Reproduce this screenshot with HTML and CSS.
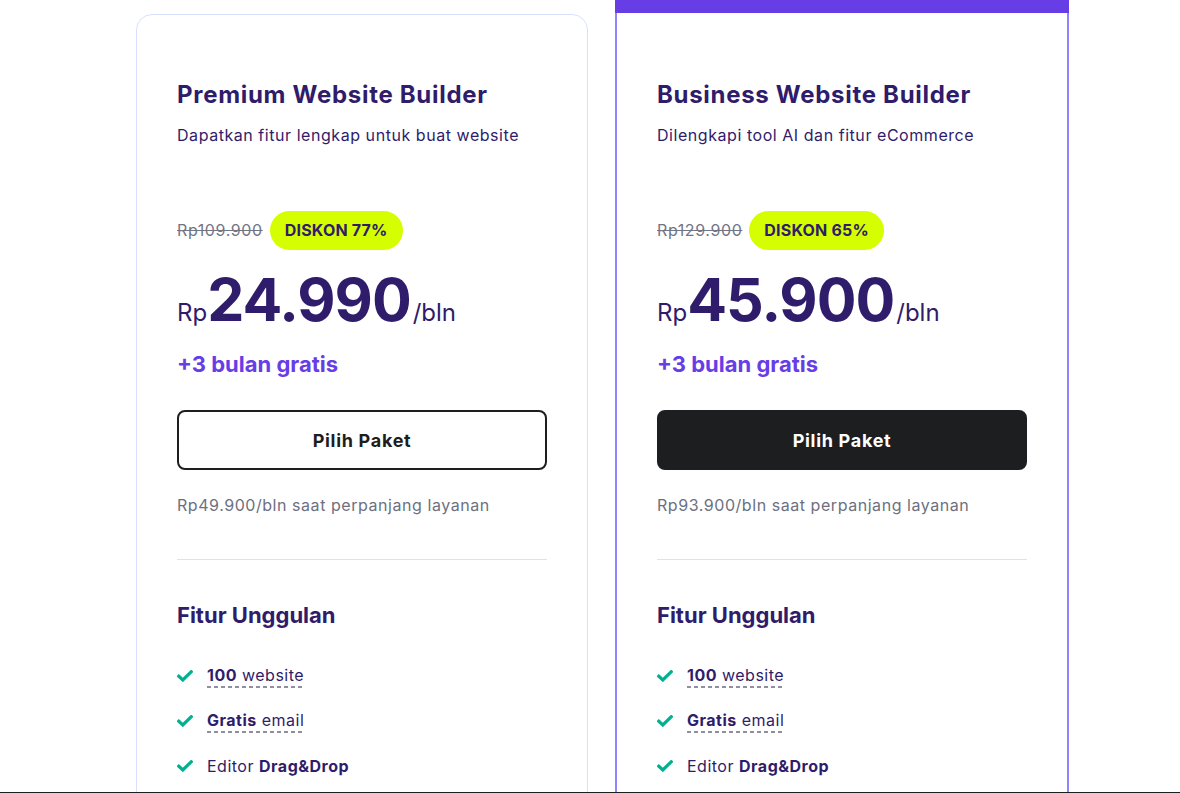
FILE: index.html
```html
<!DOCTYPE html>
<html lang="id">
<head>
<meta charset="utf-8">
<title>Paket Website Builder</title>
<link rel="stylesheet" href="styles.css">
</head>
<body>
<div class="viewport">
  <div class="cards">
    <div class="card">
      <h2 class="title">Premium Website Builder</h2>
      <p class="subtitle">Dapatkan fitur lengkap untuk buat website</p>
      <div class="discount-row">
        <span class="old-price">Rp109.900</span>
        <span class="badge">DISKON 77%</span>
      </div>
      <div class="price">
        <span class="currency">Rp</span><span class="amount">24.990</span><span class="period">/bln</span>
      </div>
      <div class="bonus">+3 bulan gratis</div>
      <button class="btn btn-outline">Pilih Paket</button>
      <p class="renewal">Rp49.900/bln saat perpanjang layanan</p>
      <hr class="divider">
      <h3 class="features-title">Fitur Unggulan</h3>
      <ul class="features">
        <li><svg class="check" viewBox="0 0 16 12"><path d="M1.8 6.2 L5.8 10 L14.2 1.8"/></svg><span class="dashed"><b>100</b> website</span></li>
        <li><svg class="check" viewBox="0 0 16 12"><path d="M1.8 6.2 L5.8 10 L14.2 1.8"/></svg><span class="dashed"><b>Gratis</b> email</span></li>
        <li><svg class="check" viewBox="0 0 16 12"><path d="M1.8 6.2 L5.8 10 L14.2 1.8"/></svg><span>Editor <b>Drag&amp;Drop</b></span></li>
      </ul>
    </div>
    <div class="featured">
      <div class="ribbon"></div>
      <div class="card card-featured">
        <h2 class="title">Business Website Builder</h2>
        <p class="subtitle">Dilengkapi tool AI dan fitur eCommerce</p>
        <div class="discount-row">
          <span class="old-price">Rp129.900</span>
          <span class="badge">DISKON 65%</span>
        </div>
        <div class="price">
          <span class="currency">Rp</span><span class="amount">45.900</span><span class="period">/bln</span>
        </div>
        <div class="bonus">+3 bulan gratis</div>
        <button class="btn btn-dark">Pilih Paket</button>
        <p class="renewal">Rp93.900/bln saat perpanjang layanan</p>
        <hr class="divider">
        <h3 class="features-title">Fitur Unggulan</h3>
        <ul class="features">
          <li><svg class="check" viewBox="0 0 16 12"><path d="M1.8 6.2 L5.8 10 L14.2 1.8"/></svg><span class="dashed"><b>100</b> website</span></li>
          <li><svg class="check" viewBox="0 0 16 12"><path d="M1.8 6.2 L5.8 10 L14.2 1.8"/></svg><span class="dashed"><b>Gratis</b> email</span></li>
          <li><svg class="check" viewBox="0 0 16 12"><path d="M1.8 6.2 L5.8 10 L14.2 1.8"/></svg><span>Editor <b>Drag&amp;Drop</b></span></li>
        </ul>
      </div>
    </div>
  </div>
</div>
</body>
</html>
```

FILE: styles.css
```css
* { box-sizing: border-box; }

html, body {
  margin: 0;
  padding: 0;
  background: #ffffff;
}

body {
  font-family: Inter, "Noto Sans", "DejaVu Sans", sans-serif;
  color: #2f1c6a;
}

.viewport {
  height: 793px;
  overflow: hidden;
  border-bottom: 1px solid #1d1e20;
}

.cards {
  display: flex;
  align-items: flex-start;
  gap: 27px;
  padding-left: 136px;
}

.card {
  width: 452px;
  margin-top: 14px;
  border: 1px solid #d8e0fd;
  border-radius: 16px;
  padding: 64px 40px 40px;
  background: #fff;
}

.featured {
  width: 454px;
  display: flex;
  flex-direction: column;
}

.ribbon {
  height: 13px;
  background: #673de6;
}

.card-featured {
  width: 454px;
  margin-top: 0;
  border: 2px solid #8c85ff;
  border-top: 0;
  border-radius: 0;
  padding-top: 66px;
}

.title {
  margin: 0;
  font-size: 24px;
  line-height: 32px;
  font-weight: 700;
  color: #2f1c6a;
  letter-spacing: 0.7px;
}

.subtitle {
  margin: 12px 0 0;
  font-size: 16px;
  line-height: 24px;
  color: #2f1c6a;
  letter-spacing: 0.55px;
}

.discount-row {
  display: flex;
  align-items: center;
  gap: 7px;
  margin-top: 63px;
  height: 40px;
}

.old-price {
  font-size: 16px;
  color: #727586;
  text-decoration: line-through;
  letter-spacing: 0.6px;
}

.badge {
  height: 39px;
  display: inline-flex;
  align-items: center;
  padding: 0 15px;
  border-radius: 20px;
  background: #d5ff00;
  font-size: 16px;
  font-weight: 700;
  color: #2f1c6a;
  letter-spacing: 0.2px;
}

.price {
  display: flex;
  align-items: baseline;
  margin-top: 16px;
  height: 68px;
  color: #2f1c6a;
}

.currency {
  font-size: 24px;
}

.amount {
  font-size: 59px;
  line-height: 68px;
  font-weight: 700;
  letter-spacing: -1px;
}

.period {
  font-size: 24px;
  margin-left: 2px;
}

.bonus {
  margin-top: 14px;
  font-size: 22px;
  line-height: 32px;
  font-weight: 700;
  color: #673de6;
}

.btn {
  display: block;
  width: 100%;
  height: 60px;
  margin-top: 30px;
  border-radius: 8px;
  font-family: inherit;
  font-size: 18px;
  font-weight: 700;
  letter-spacing: 0.7px;
  cursor: pointer;
}

.btn-outline {
  background: #fff;
  border: 2px solid #1d1e20;
  color: #1d1e20;
}

.btn-dark {
  background: #1d1e20;
  border: 2px solid #1d1e20;
  color: #fff;
}

.renewal {
  margin: 23px 0 0;
  font-size: 16px;
  line-height: 24px;
  color: #6d7081;
  letter-spacing: 0.55px;
}

.divider {
  margin: 42px 0 0;
  border: 0;
  border-top: 1px solid #dbe1fb;
  height: 0;
}

.features-title {
  margin: 39px 0 0;
  font-size: 22px;
  line-height: 32px;
  font-weight: 700;
  color: #2f1c6a;
}

.features {
  list-style: none;
  margin: 33px 0 0;
  padding: 0;
  display: flex;
  flex-direction: column;
  gap: 21px;
}

.features li {
  display: flex;
  align-items: center;
  gap: 14px;
  height: 24px;
  font-size: 16px;
  line-height: 24px;
  color: #2f1c6a;
  letter-spacing: 0.5px;
}

.features b {
  font-weight: 700;
}

.check {
  width: 16px;
  height: 12px;
  flex: none;
  fill: none;
  stroke: #00b090;
  stroke-width: 3.2;
  stroke-linecap: square;
}

.dashed {
  line-height: 22px;
  background-image: linear-gradient(to right, #8e90a0 60%, transparent 60%);
  background-position: left bottom;
  background-size: 7px 2px;
  background-repeat: repeat-x;
  padding-bottom: 2px;
}
```
